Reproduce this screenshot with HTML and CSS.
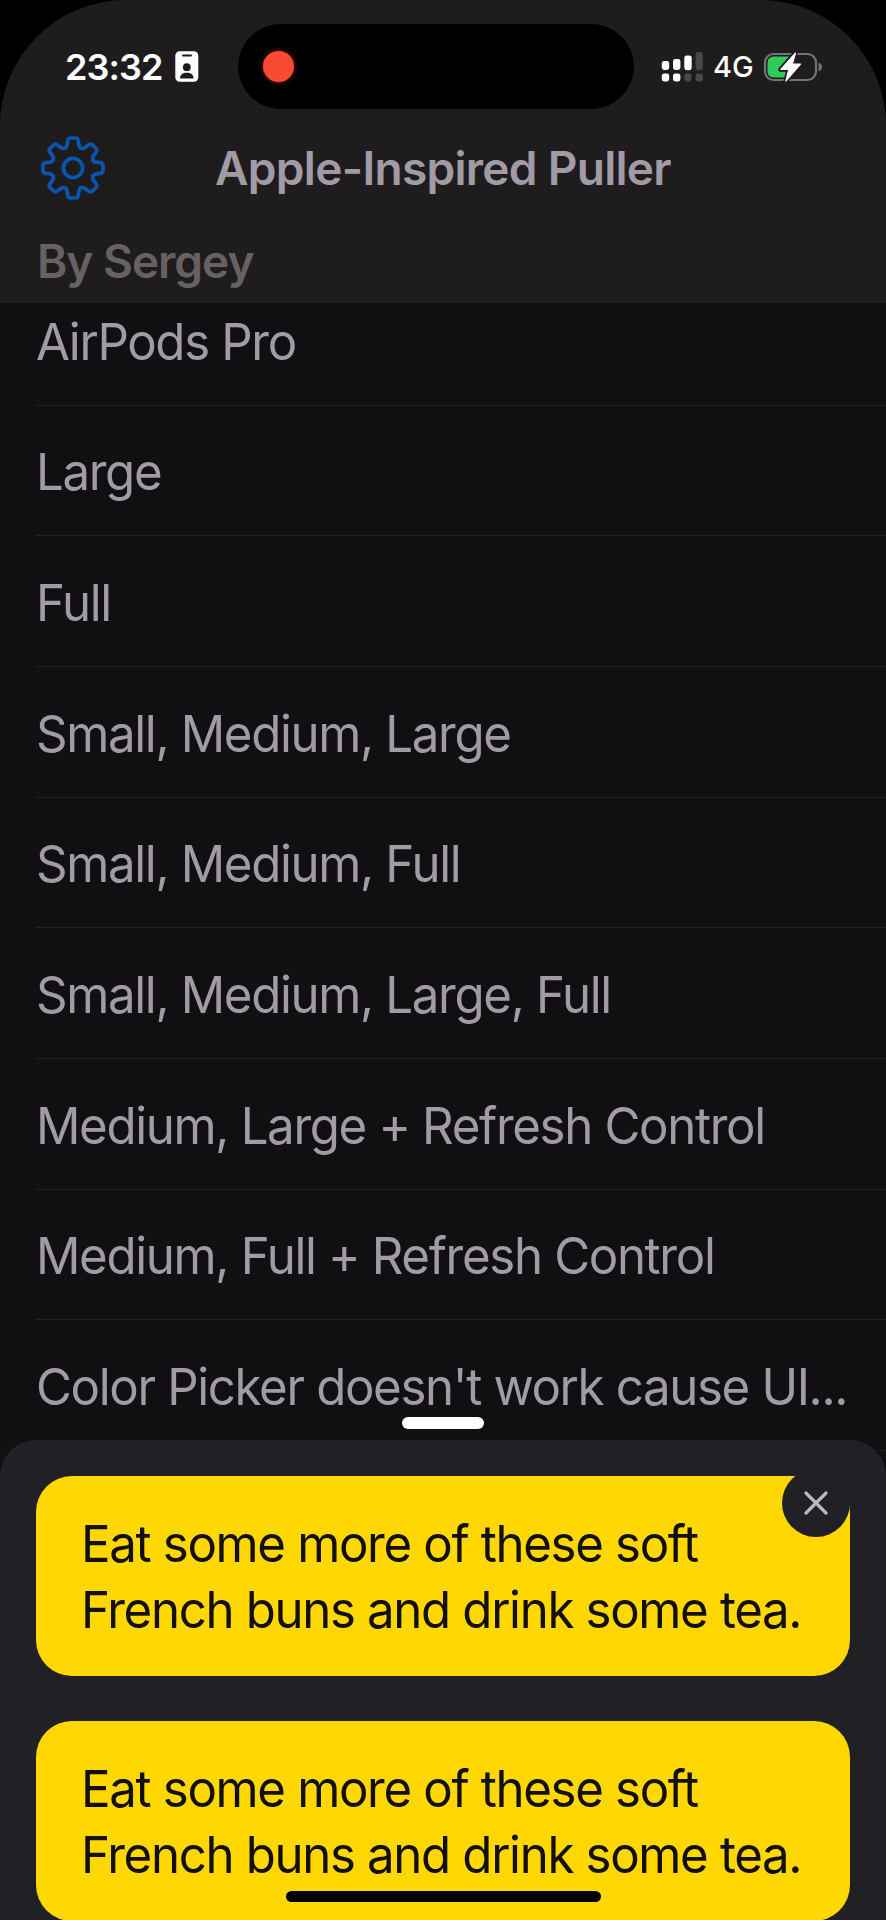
FILE: index.html
```html
<!DOCTYPE html>
<html lang="en">
<head>
<meta charset="utf-8">
<title>Apple-Inspired Puller</title>
<link rel="stylesheet" href="styles.css">
</head>
<body>
<div class="screen">
  <header class="header">
    <div class="status">
      <div class="status-left">
        <span class="clock">23:32</span>
        <svg class="badge-icon" width="24" height="31" viewBox="0 0 24 31">
          <rect x="0.3" y="0.3" width="23" height="30.4" rx="4.5" fill="#fff"/>
          <rect x="7" y="3.4" width="10" height="2" rx="1" fill="#1f1c1f"/>
          <circle cx="11.8" cy="16.2" r="3.9" fill="#1f1c1f"/>
          <path d="M5 27.5C5 23.5 8 21.8 11.8 21.8S18.6 23.5 18.6 27.5Z" fill="#1f1c1f"/>
        </svg>
      </div>
      <div class="island"><span class="record-dot"></span></div>
      <div class="status-right">
        <svg class="signal" width="42" height="31" viewBox="0 0 42 31">
          <g fill="#fff">
            <rect x="0.8" y="10" width="7.4" height="9" rx="2.4"/>
            <rect x="12" y="8" width="7.4" height="11" rx="2.4"/>
            <rect x="23.3" y="4.4" width="7.4" height="14.8" rx="2.4"/>
            <rect x="0.8" y="22.4" width="7.4" height="8" rx="2.4"/>
            <rect x="12" y="22.4" width="7.4" height="8" rx="2.4"/>
          </g>
          <g fill="#4a474c">
            <rect x="34.6" y="1" width="7.2" height="18.2" rx="2.4"/>
            <rect x="23.3" y="22.4" width="7.2" height="8" rx="2.4"/>
            <rect x="34.6" y="22.4" width="7.2" height="8" rx="2.4"/>
          </g>
        </svg>
        <span class="network">4G</span>
        <svg class="battery" width="60" height="32" viewBox="0 0 60 32">
          <rect x="2" y="3" width="51" height="26" rx="8.5" fill="none" stroke="#77727a" stroke-width="2.2"/>
          <path d="M55.5 11.5C58 12.6 59 14 59 16S58 19.4 55.5 20.5Z" fill="#77727a"/>
          <path d="M11 5.5H27V26.5H11Q4.500 26.500 4.500 20V12Q4.500 5.500 11 5.500Z" fill="#30cb5a"/>
          <path d="M32.500 1.500L17.500 18.500H25.500L22.500 30.500L37.800 13H29.500Z" fill="#fff" stroke="#1f1c1f" stroke-width="4.500" stroke-linejoin="round"/>
          <path d="M32.500 2L17.800 18.300H25.800L22.800 30L37.500 13.200H29.300Z" fill="#fff" stroke="#fff" stroke-width="1.200" stroke-linejoin="round"/>
        </svg>
      </div>
    </div>
    <div class="navbar">
      <svg class="gear" width="66" height="66" viewBox="-33 -33 66 66">
        <defs>
          <path id="tooth" d="M-8.200 -19.800C-6.400 -20.500 -6 -21.800 -5.800 -23.500L-5.300 -27Q-5 -30 -2.500 -30H2.500Q5 -30 5.300 -27L5.800 -23.500C6 -21.800 6.400 -20.500 8.200 -19.800"/>
        </defs>
        <g fill="none" stroke="#0a55b0" stroke-width="3.700" stroke-linecap="round">
          <use href="#tooth"/>
          <use href="#tooth" transform="rotate(45)"/>
          <use href="#tooth" transform="rotate(90)"/>
          <use href="#tooth" transform="rotate(135)"/>
          <use href="#tooth" transform="rotate(180)"/>
          <use href="#tooth" transform="rotate(225)"/>
          <use href="#tooth" transform="rotate(270)"/>
          <use href="#tooth" transform="rotate(315)"/>
          <circle r="9.600"/>
        </g>
      </svg>
      <h1 class="title">Apple-Inspired Puller</h1>
    </div>
    <h2 class="section">By Sergey</h2>
  </header>
  <ul class="list">
    <li class="row"><span class="label">AirPods Pro</span></li>
    <li class="row"><span class="label">Large</span></li>
    <li class="row"><span class="label">Full</span></li>
    <li class="row"><span class="label">Small, Medium, Large</span></li>
    <li class="row"><span class="label">Small, Medium, Full</span></li>
    <li class="row"><span class="label">Small, Medium, Large, Full</span></li>
    <li class="row"><span class="label">Medium, Large + Refresh Control</span></li>
    <li class="row"><span class="label">Medium, Full + Refresh Control</span></li>
    <li class="row"><span class="label">Color Picker doesn't work cause UI...</span></li>
  </ul>
</div>
<div class="sheet">
  <span class="grabber"></span>
  <div class="card"><p class="card-text">Eat some more of these soft<br>French buns and drink some tea.</p></div>
  <div class="card"><p class="card-text">Eat some more of these soft<br>French buns and drink some tea.</p></div>
  <button class="close" aria-label="Close">
    <svg width="24" height="24" viewBox="0 0 24 24"><path d="M2 2L22 22M22 2L2 22" stroke="#bbb8c0" stroke-width="3.200" stroke-linecap="round"/></svg>
  </button>
  <span class="home"></span>
</div>
</body>
</html>
```
FILE: styles.css
```css
* { box-sizing: border-box; }
body {
  margin: 0;
  width: 886px;
  height: 1920px;
  position: relative;
  overflow: hidden;
  background: #000;
  font-family: Inter, "Liberation Sans", sans-serif;
}
.screen {
  height: 1920px;
  overflow: hidden;
  background: #110f11;
  border-radius: 126px 126px 0 0;
}
.header {
  position: relative;
  z-index: 1;
  height: 303px;
  background: #1f1c1e;
}
.status {
  height: 133px;
  padding: 24px 60px 0 65px;
  display: grid;
  grid-template-columns: 173px 396px 1fr;
}
.status-left, .status-right { display: flex; align-items: center; height: 85px; }
.clock { font-size: 36px; font-weight: 600; color: #fff; width: 110px; white-space: nowrap; letter-spacing: -0.9px; }
.island {
  height: 85px;
  border-radius: 43px;
  background: #000;
  display: flex;
  align-items: center;
  padding-left: 25px;
}
.record-dot {
  width: 31px;
  height: 31px;
  border-radius: 50%;
  background: #fb4a33;
  box-shadow: 0 0 5px #7c2015;
}
.status-right { padding-left: 27px; }
.network { margin-left: 10px; width: 50px; font-size: 29px; font-weight: 500; color: #fff; line-height: 34px; }
.battery { flex: none; }
.navbar {
  height: 70px;
  display: grid;
  grid-template-columns: 176px 534px 176px;
  align-items: center;
}
.gear { margin-left: 40px; }
.title, .section { margin: 0; font-weight: 600; font-size: 46px; white-space: nowrap; }
.title { text-align: center; color: #a09ba5; letter-spacing: -0.7px; }
.section { padding-left: 37px; margin-top: 30px; line-height: 56px; color: #666264; letter-spacing: -1px; }
.list { list-style: none; margin: -28.200px 0 0; padding: 0; }
.row {
  height: 130.700px;
  margin-left: 36px;
  padding-top: 4px;
  display: flex;
  align-items: center;
  border-bottom: 1px solid #232124;
}
.label, .card-text {
  font-size: 51px;
  letter-spacing: -1.400px;
  white-space: nowrap;
  transform: scaleX(0.965);
  transform-origin: left center;
}
.label { line-height: 62px; color: #a09ba5; }
.card-text { margin: 0; line-height: 65.500px; }
.sheet {
  position: absolute;
  left: 0;
  right: 0;
  bottom: 0;
  height: 480px;
  padding: 36px 36px 0;
  display: flex;
  flex-direction: column;
  gap: 45px;
  background: #212025;
  border-radius: 36px 36px 0 0;
}
.card {
  flex: none;
  height: 200px;
  padding: 35px 20px 0 45px;
  border-radius: 36px;
  background: #ffd803;
  color: #120f0c;
}
.grabber {
  position: absolute;
  left: 402px;
  top: -23px;
  width: 82px;
  height: 12px;
  border-radius: 6px;
  background: #fff;
}
.close {
  position: absolute;
  right: 36px;
  top: 29px;
  width: 68px;
  height: 68px;
  padding: 0;
  border: 0;
  border-radius: 50%;
  background: #212025;
  display: grid;
  place-items: center;
}
.home {
  position: absolute;
  left: 286px;
  bottom: 18px;
  width: 315px;
  height: 11px;
  border-radius: 6px;
  background: #000;
}
```
